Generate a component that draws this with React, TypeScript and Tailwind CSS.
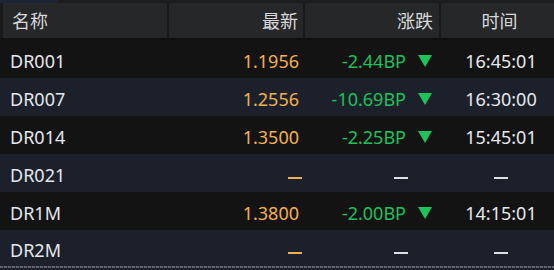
import React from "react";

interface Quote {
  name: string;
  price?: string;
  change?: string;
  time?: string;
}

const quotes: Quote[] = [
  { name: "DR001", price: "1.1956", change: "-2.44BP", time: "16:45:01" },
  { name: "DR007", price: "1.2556", change: "-10.69BP", time: "16:30:00" },
  { name: "DR014", price: "1.3500", change: "-2.25BP", time: "15:45:01" },
  { name: "DR021" },
  { name: "DR1M", price: "1.3800", change: "-2.00BP", time: "14:15:01" },
  { name: "DR2M" },
];

const font = { fontFamily: '"Noto Sans", "Noto Sans CJK SC", sans-serif' };

// small down arrow next to the change value
const DownArrow: React.FC = () => (
  <svg width="14" height="12" viewBox="0 0 14 12" className="ml-[12px] mt-[1px]">
    <polygon points="0,0 14,0 7,12" fill="#1ec15a" />
  </svg>
);

const Dash: React.FC<{ color: string; className?: string }> = ({ color, className }) => (
  <div className={`h-[2px] w-[14px] mt-[6px] ${color} ${className ?? ""}`} />
);

const App: React.FC = () => {
  return (
    <div
      className="w-[554px] h-[270px] bg-[#1b202a] overflow-hidden text-[18px] leading-none"
      style={font}
    >
      {/* top strip */}
      <div className="flex h-[3px]">
        <div className="w-[58px] bg-[#1b2434]" />
        <div className="flex-1 bg-[#1c1c1d]" />
      </div>

      {/* header */}
      <div className="flex h-[37px] bg-[#1a1a1b] border-b-2 border-[#101011] text-[#d6d7d9]">
        <div className="w-[167px] pl-[3px]">
          <div className="h-full bg-[#262729] flex items-center pl-[9px] pt-[1px]">名称</div>
        </div>
        <div className="w-[136px] pl-[2px]">
          <div className="h-full bg-[#262729] flex items-center justify-end pr-[5px] pt-[1px]">最新</div>
        </div>
        <div className="w-[136px] pl-[2px]">
          <div className="h-full bg-[#262729] flex items-center justify-end pr-[6px] pt-[1px]">涨跌</div>
        </div>
        <div className="flex-1 pl-[2px]">
          <div className="h-full bg-[#262729] flex items-center justify-center pl-[4px] pt-[1px]">时间</div>
        </div>
      </div>

      {/* rows */}
      {quotes.map((q, i) => (
        <div
          key={q.name}
          className={`flex items-center pt-[3px] ${i === quotes.length - 1 ? "h-[36px]" : "h-[38px]"} ${
            i % 2 === 0 ? "bg-[#131313]" : "bg-[#1b202a]"
          }`}
        >
          <div className="w-[167px] pl-[10px] text-[#e4e7ec]">{q.name}</div>
          <div className="w-[136px] flex justify-end pr-[4px] text-[#f3b04c]">
            {q.price ? q.price : <Dash color="bg-[#f0b050]" className="-mr-[3px]" />}
          </div>
          <div className="w-[136px] flex items-center justify-end pr-[7px] text-[#1ec15a]">
            {q.change ? (
              <>
                <span>{q.change}</span>
                <DownArrow />
              </>
            ) : (
              <Dash color="bg-[#dcdfe4]" className="mr-[24px]" />
            )}
          </div>
          <div className="flex-1 flex justify-center pl-[9px] text-[#e6e8ec]">
            {q.time ? q.time : <Dash color="bg-[#dcdfe4]" />}
          </div>
        </div>
      ))}

      {/* dashed bottom rule */}
      <div className="h-[2px] bg-[repeating-linear-gradient(90deg,#5f6570_0_3px,#2a2f38_3px_4px)]" />
    </div>
  );
};

export default App;
